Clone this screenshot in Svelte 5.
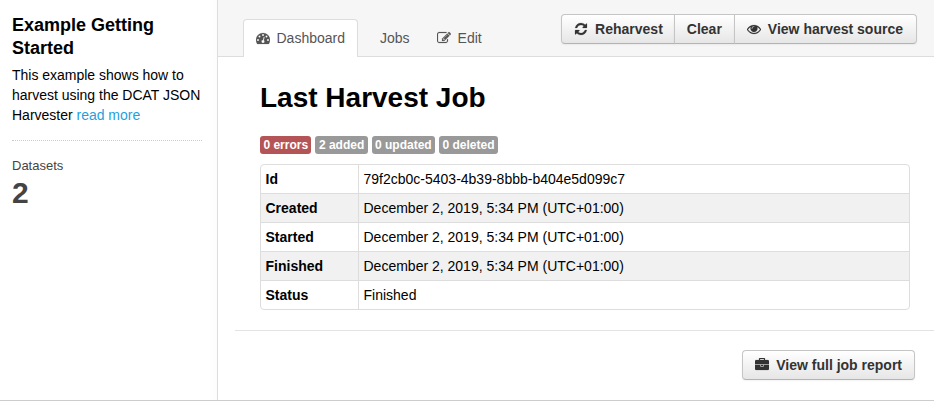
<script>
  const icons = {
    dashboard: 'M384 1152q0-53-37.5-90.5t-90.5-37.5-90.5 37.5-37.5 90.5 37.5 90.5 90.5 37.5 90.5-37.5 37.5-90.5zm192-448q0-53-37.5-90.5t-90.5-37.5-90.5 37.5-37.5 90.5 37.5 90.5 90.5 37.5 90.5-37.5 37.5-90.5zm428 481l101-382q6-26-7.5-48.5t-38.5-29.5-48 6.5-30 39.5l-101 382q-60 5-107 43.5t-63 98.5q-20 77 20 146t117 89 146-20 89-117q16-60-6-117t-72-91zm660-33q0-53-37.5-90.5t-90.5-37.5-90.5 37.5-37.5 90.5 37.5 90.5 90.5 37.5 90.5-37.5 37.5-90.5zm-640-640q0-53-37.5-90.5t-90.5-37.5-90.5 37.5-37.5 90.5 37.5 90.5 90.5 37.5 90.5-37.5 37.5-90.5zm448 192q0-53-37.5-90.5t-90.5-37.5-90.5 37.5-37.5 90.5 37.5 90.5 90.5 37.5 90.5-37.5 37.5-90.5zm320 448q0 261-141 483-19 29-54 29h-1402q-35 0-54-29-141-221-141-483 0-182 71-348t191-286 286-191 348-71 348 71 286 191 191 286 71 348z',
    edit: 'M888 1184l116-116-152-152-116 116v56h96v96h56zm440-720q-16-16-33 1l-350 350q-17 17-1 33t33-1l350-350q17-17 1-33zm80 594v190q0 119-84.5 203.5t-203.5 84.5h-832q-119 0-203.5-84.5t-84.5-203.5v-832q0-119 84.5-203.5t203.5-84.5h832q63 0 117 25 15 7 18 23 3 17-9 29l-49 49q-14 14-32 8-23-6-45-6h-832q-66 0-113 47t-47 113v832q0 66 47 113t113 47h832q66 0 113-47t47-113v-126q0-13 9-22l64-64q15-15 35-7t20 29zm-96-738l288 288-672 672h-288v-288zm444 132l-92 92-288-288 92-92q28-28 68-28t68 28l152 152q28 28 28 68t-28 68z',
    refresh: 'M1639 1056q0 5-1 7-64 268-268 434.5t-478 166.5q-146 0-282.5-55t-243.5-157l-129 129q-19 19-45 19t-45-19-19-45v-448q0-26 19-45t45-19h448q26 0 45 19t19 45-19 45l-137 137q71 66 161 102t187 36q134 0 250-65t186-179q11-17 53-117 8-23 30-23h192q13 0 22.5 9.5t9.5 22.5zm25-800v448q0 26-19 45t-45 19h-448q-26 0-45-19t-19-45 19-45l138-138q-148-137-349-137-134 0-250 65t-186 179q-11 17-53 117-8 23-30 23h-199q-13 0-22.5-9.5t-9.5-22.5v-7q65-268 270-434.5t480-166.5q146 0 284 55.5t245 156.5l130-129q19-19 45-19t45 19 19 45z',
    eye: 'M1664 960q-152-236-381-353 61 104 61 225 0 185-131.5 316.5t-316.5 131.5-316.5-131.5-131.5-316.5q0-121 61-225-229 117-381 353 133 205 333.5 326.5t434.5 121.5 434.5-121.5 333.5-326.5zm-720-384q0-20-14-34t-34-14q-125 0-214.5 89.5t-89.5 214.5q0 20 14 34t34 14 34-14 14-34q0-86 61-147t147-61q20 0 34-14t14-34zm848 384q0 34-20 69-140 230-376.5 368.5t-499.5 138.5-499.5-139-376.5-368q-20-35-20-69t20-69q140-229 376.5-368t499.5-139 499.5 139 376.5 368q20 35 20 69z',
    briefcase: 'M640 256h512v-128h-512v128zm1152 640v480q0 66-47 113t-113 47h-1472q-66 0-113-47t-47-113v-480h672v160q0 26 19 45t45 19h320q26 0 45-19t19-45v-160h672zm-768 0v128h-256v-128h256zm768-480v384h-1792v-384q0-66 47-113t113-47h352v-160q0-40 28-68t68-28h576q40 0 68 28t28 68v160h352q66 0 113 47t47 113z'
  };

  const tabs = [
    { label: 'Dashboard', icon: 'dashboard', active: true },
    { label: 'Jobs' },
    { label: 'Edit', icon: 'edit' }
  ];

  const actions = [
    { label: 'Reharvest', icon: 'refresh' },
    { label: 'Clear' },
    { label: 'View harvest source', icon: 'eye' }
  ];

  const counts = [
    { label: '0 errors', error: true },
    { label: '2 added' },
    { label: '0 updated' },
    { label: '0 deleted' }
  ];

  const rows = [
    ['Id', '79f2cb0c-5403-4b39-8bbb-b404e5d099c7'],
    ['Created', 'December 2, 2019, 5:34 PM (UTC+01:00)'],
    ['Started', 'December 2, 2019, 5:34 PM (UTC+01:00)'],
    ['Finished', 'December 2, 2019, 5:34 PM (UTC+01:00)'],
    ['Status', 'Finished']
  ];
</script>

{#snippet icon(name)}
  <svg class="icon {name}" viewBox="0 0 1792 1792" aria-hidden="true"><path d={icons[name]} /></svg>
{/snippet}

<div class="wrapper">
  <aside>
    <h1>Example Getting Started</h1>
    <p>This example shows how to harvest using the DCAT JSON Harvester <a href="#more">read more</a></p>
    <dl>
      <dt>Datasets</dt>
      <dd>2</dd>
    </dl>
  </aside>

  <main>
    <header>
      <nav>
        {#each tabs as tab}
          <a href="#{tab.label}" class="tab" class:active={tab.active}>
            {#if tab.icon}{@render icon(tab.icon)}{/if}<span>{tab.label}</span>
          </a>
        {/each}
      </nav>
      <div class="group">
        {#each actions as action}
          <button>{#if action.icon}{@render icon(action.icon)}{/if}<span>{action.label}</span></button>
        {/each}
      </div>
    </header>

    <section>
      <h2>Last Harvest Job</h2>
      <div class="counts">
        {#each counts as count}
          <span class="label" class:error={count.error}>{count.label}</span>
        {/each}
      </div>
      <table>
        <tbody>
          {#each rows as [name, value]}
            <tr><th>{name}</th><td>{value}</td></tr>
          {/each}
        </tbody>
      </table>
    </section>

    <footer>
      <button>{@render icon('briefcase')}<span>View full job report</span></button>
    </footer>
  </main>
</div>

<style>
  :global(body) {
    margin: 0;
    background: #fff;
  }
  .wrapper {
    box-sizing: border-box;
    display: flex;
    width: 934px;
    height: 401px;
    border-bottom: 1px solid #ccc;
    font: 14px/20px "Liberation Sans", Arial, sans-serif;
    color: #000;
  }
  aside {
    box-sizing: border-box;
    width: 218px;
    flex: none;
    padding: 14px 15px 0 12px;
    border-right: 1px solid #ddd;
    background: linear-gradient(to right, #fff 208px, #fcfcfc 217px);
  }
  h1 {
    margin: 0 0 5px;
    font-size: 18px;
    line-height: 23px;
  }
  p {
    margin: 0;
    letter-spacing: -0.01px;
  }
  a {
    color: #187794;
    text-decoration: none;
  }
  p a {
    color: #1f9fe0;
  }
  dl {
    margin: 15px 0 0;
    padding-top: 16px;
    border-top: 1px dotted #ccc;
    color: #444;
  }
  dt {
    font-size: 13px;
    line-height: 18px;
  }
  dd {
    margin: 2px 0 0;
    font-size: 30px;
    line-height: 32px;
    font-weight: bold;
  }
  main {
    flex: 1;
    display: flex;
    flex-direction: column;
  }
  header {
    box-sizing: border-box;
    display: flex;
    justify-content: space-between;
    align-items: flex-start;
    height: 57px;
    padding: 14px 17px 0 25px;
    background: #f6f6f6;
    border-bottom: 1px solid #ddd;
  }
  nav {
    display: flex;
    margin-top: 5px;
  }
  .tab {
    box-sizing: border-box;
    display: flex;
    align-items: center;
    height: 38px;
    padding: 0 11px 2px;
    border: 1px solid transparent;
    border-bottom: 0;
    border-radius: 4px 4px 0 0;
    color: #555;
  }
  .tab + .tab {
    margin-left: 10px;
  }
  .tab + .tab + .tab {
    margin-left: 3px;
  }
  .tab.active {
    padding: 0 12px 2px 11.5px;
    background: #fff;
    border-color: #ddd;
  }
  .icon {
    width: 14px;
    height: 14px;
    margin-right: 7px;
    flex: none;
    fill: currentColor;
    stroke: currentColor;
    stroke-width: 24px;
  }
  .group {
    display: flex;
  }
  button {
    box-sizing: border-box;
    display: flex;
    align-items: center;
    height: 30px;
    margin: 0;
    padding: 0 12px;
    border: 1px solid #c5c5c5;
    border-bottom-color: #b3b3b3;
    border-radius: 4px;
    background: linear-gradient(#fff, #e6e6e6);
    box-shadow: inset 0 1px 0 rgba(255, 255, 255, 0.2), 0 1px 2px rgba(0, 0, 0, 0.05);
    font: bold 14px/20px "Liberation Sans", Arial, sans-serif;
    color: #333;
    white-space: nowrap;
  }
  .group button {
    border-radius: 0;
  }
  .group button + button {
    margin-left: -1px;
  }
  .group button:first-child {
    padding-right: 11px;
    border-radius: 4px 0 0 4px;
  }
  .group button:last-child {
    padding-right: 13px;
    border-radius: 0 4px 4px 0;
  }
  section {
    padding: 20px 24px 20px 42px;
  }
  h2 {
    margin: 0;
    font-size: 28px;
    line-height: 42px;
  }
  .counts {
    display: flex;
    gap: 4px;
    margin: 17px 0 10px;
  }
  .label {
    height: 18px;
    padding: 0 3.4px;
    border-radius: 3px;
    background: #999;
    color: #fff;
    font-size: 12px;
    line-height: 18px;
    font-weight: bold;
  }
  .label.error {
    background: #b55457;
  }
  table {
    box-sizing: border-box;
    width: 650px;
    table-layout: fixed;
    border: 1px solid #ddd;
    border-radius: 4px;
    border-spacing: 0;
    overflow: hidden;
  }
  th,
  td {
    box-sizing: border-box;
    height: 29px;
    padding: 4px 4.5px;
    text-align: left;
    border-top: 1px solid #ddd;
  }
  th {
    width: 97px;
  }
  td {
    border-left: 1px solid #ddd;
  }
  tr:first-child th,
  tr:first-child td {
    height: 28px;
    border-top: 0;
  }
  tr:nth-child(even) {
    background: #f1f1f1;
  }
  footer {
    display: flex;
    justify-content: flex-end;
    margin-left: 17px;
    padding: 19px 19px 0 0;
    border-top: 1px solid #e3e3e3;
  }
</style>
